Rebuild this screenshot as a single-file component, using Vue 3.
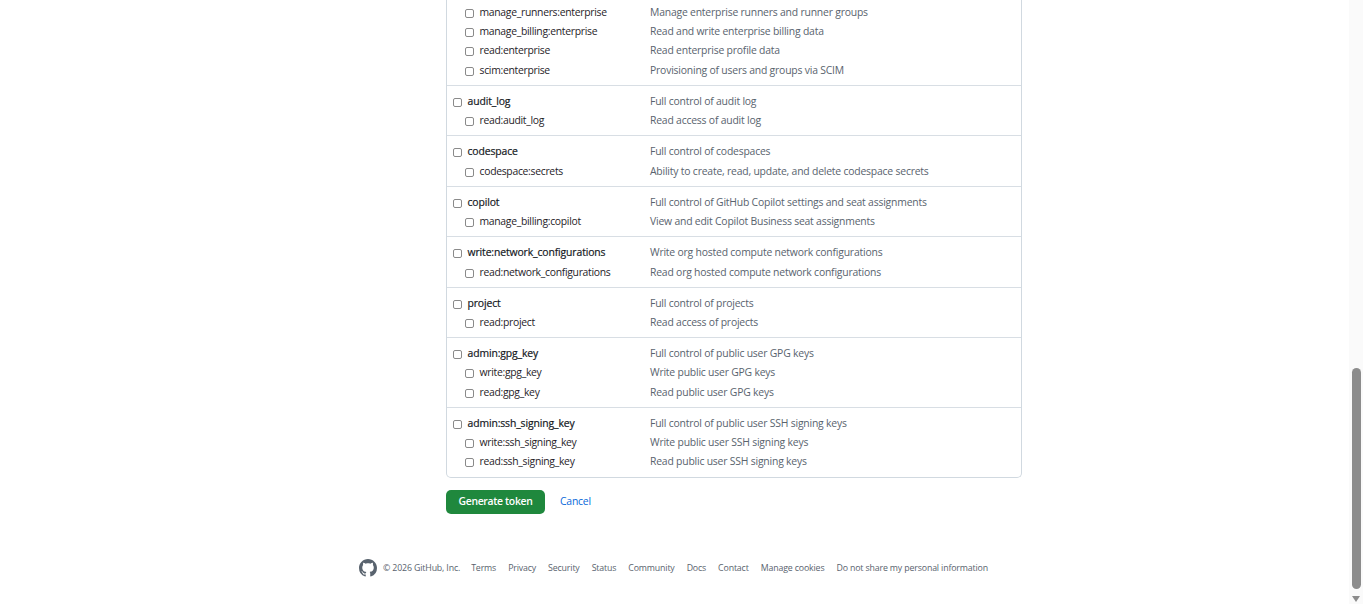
<script setup>
const groups = [
  [
    ['manage_runners:enterprise', 'Manage enterprise runners and runner groups', true],
    ['manage_billing:enterprise', 'Read and write enterprise billing data', true],
    ['read:enterprise', 'Read enterprise profile data', true],
    ['scim:enterprise', 'Provisioning of users and groups via SCIM', true],
  ],
  [
    ['audit_log', 'Full control of audit log'],
    ['read:audit_log', 'Read access of audit log', true],
  ],
  [
    ['codespace', 'Full control of codespaces'],
    ['codespace:secrets', 'Ability to create, read, update, and delete codespace secrets', true],
  ],
  [
    ['copilot', 'Full control of GitHub Copilot settings and seat assignments'],
    ['manage_billing:copilot', 'View and edit Copilot Business seat assignments', true],
  ],
  [
    ['write:network_configurations', 'Write org hosted compute network configurations'],
    ['read:network_configurations', 'Read org hosted compute network configurations', true],
  ],
  [
    ['project', 'Full control of projects'],
    ['read:project', 'Read access of projects', true],
  ],
  [
    ['admin:gpg_key', 'Full control of public user GPG keys'],
    ['write:gpg_key', 'Write public user GPG keys', true],
    ['read:gpg_key', 'Read public user GPG keys', true],
  ],
  [
    ['admin:ssh_signing_key', 'Full control of public user SSH signing keys'],
    ['write:ssh_signing_key', 'Write public user SSH signing keys', true],
    ['read:ssh_signing_key', 'Read public user SSH signing keys', true],
  ],
]
const links = ['Terms', 'Privacy', 'Security', 'Status', 'Community', 'Docs', 'Contact', 'Manage cookies', 'Do not share my personal information']
</script>

<template>
  <div class="page">
    <main class="main">
      <div class="content">
        <section class="panel">
          <div v-for="(group, g) in groups" :key="g" class="group">
            <label v-for="row in group" :key="row[0]" class="row" :class="{ child: row[2] }">
              <span class="name">
                <input type="checkbox" class="check" />
                <span>{{ row[0] }}</span>
              </span>
              <span class="desc">{{ row[1] }}</span>
            </label>
          </div>
        </section>
        <div class="actions">
          <button class="primary" type="button">Generate token</button>
          <a class="cancel" href="#">Cancel</a>
        </div>
      </div>
      <footer class="footer">
        <svg class="mark" viewBox="0 0 16 16" aria-hidden="true">
          <path d="M8 0c4.42 0 8 3.58 8 8a8.013 8.013 0 0 1-5.45 7.59c-.4.08-.55-.17-.55-.38 0-.27.01-1.13.01-2.2 0-.75-.25-1.23-.54-1.48 1.78-.2 3.65-.88 3.65-3.95 0-.88-.31-1.59-.82-2.15.08-.2.36-1.02-.08-2.12 0 0-.67-.22-2.2.82-.64-.18-1.32-.27-2-.27-.68 0-1.36.09-2 .27-1.53-1.03-2.2-.82-2.2-.82-.44 1.1-.16 1.92-.08 2.12-.51.56-.82 1.28-.82 2.15 0 3.06 1.86 3.75 3.64 3.95-.23.2-.44.55-.51 1.07-.46.21-1.61.55-2.33-.66-.15-.24-.6-.83-1.23-.82-.67.01-.27.38.01.53.34.19.73.9.82 1.13.16.45.68 1.31 2.69.94 0 .67.01 1.3.01 1.49 0 .21-.15.45-.55.38A7.995 7.995 0 0 1 0 8c0-4.42 3.58-8 8-8Z" />
        </svg>
        <span class="copy">© 2026 GitHub, Inc.</span>
        <nav class="links">
          <a v-for="l in links" :key="l" href="#">{{ l }}</a>
        </nav>
      </footer>
    </main>
    <aside class="scrollbar">
      <div class="thumb"></div>
      <div class="arrow"></div>
    </aside>
  </div>
</template>

<style>
html, body { margin: 0; background: #fff; overflow: hidden; }
</style>

<style scoped>
.page {
  display: flex;
  height: 604px;
  overflow: hidden;
  font-family: "Open Sans", "Noto Sans", sans-serif;
  font-size: 10.4px;
  letter-spacing: -0.2px;
  color: #1f2328;
}
.main { flex: 1; min-width: 0; }
.content { margin-left: 446px; width: 576px; }
.panel {
  box-sizing: border-box;
  border: 1px solid #d1d9e0;
  border-top: 0;
  border-radius: 0 0 5px 5px;
  padding-top: 1.9px;
}
.group { padding: 5.3px 0; border-top: 1px solid #d8dee4; }
.group:first-child { border-top: 0; padding: 0 0 5.6px; }
.group:last-child { padding-bottom: 6px; }
.row {
  display: flex;
  align-items: center;
  height: 19.4px;
  padding-left: 6px;
  white-space: nowrap;
}
.row.child { padding-left: 18px; }
.name {
  display: flex;
  align-items: center;
  gap: 5.5px;
  width: 197px;
  letter-spacing: -0.12px;
  color: #14181d;
  -webkit-text-stroke: 0.2px #14181d;
}
.row.child .name {
  width: 185px;
  letter-spacing: -0.3px;
  color: #1f2328;
  -webkit-text-stroke: 0;
}
.desc { color: #59636e; }
.check {
  appearance: none;
  box-sizing: border-box;
  width: 9px;
  height: 9px;
  margin: 3px 0 0;
  flex: none;
  background: #fff;
  border: 1px solid #8a8a8a;
  border-radius: 2px;
}
.actions { display: flex; align-items: center; gap: 15px; margin-top: 12px; }
.primary {
  width: 99px;
  height: 24px;
  padding: 0 0 3px;
  border: 0;
  border-radius: 5px;
  background: #1f883d;
  color: #fff;
  font: 600 10.4px "Open Sans", "Noto Sans", sans-serif;
  letter-spacing: -0.32px;
}
.cancel { color: #0969da; text-decoration: none; margin-bottom: 3px; }
.footer {
  display: flex;
  align-items: center;
  justify-content: center;
  margin-top: 45px;
  padding-right: 2px;
  color: #59636e;
  font-size: 8.8px;
  letter-spacing: -0.15px;
}
.mark { width: 18px; height: 18px; fill: #59636e; flex: none; margin-right: 6px; }
.links { display: flex; gap: 12px; margin-left: 11px; }
.links a { color: #59636e; text-decoration: none; }
.scrollbar {
  position: relative;
  flex: none;
  width: 14px;
  background: #fafafa;
}
.thumb {
  position: absolute;
  top: 368px;
  left: 3px;
  width: 9px;
  height: 221px;
  border-radius: 5px;
  background: #8c8c8c;
}
.arrow {
  position: absolute;
  top: 596px;
  left: 3px;
  width: 0;
  height: 0;
  border-left: 4.5px solid transparent;
  border-right: 4.5px solid transparent;
  border-top: 6px solid #8c8c8c;
}
</style>
